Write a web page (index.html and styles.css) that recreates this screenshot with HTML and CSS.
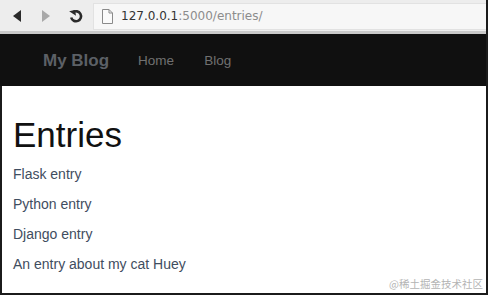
FILE: index.html
```html
<!DOCTYPE html>
<html lang="en">
<head>
<meta charset="utf-8">
<title>Entries</title>
<link rel="stylesheet" href="styles.css">
</head>
<body>
<div class="frame">
  <div class="toolbar">
    <div class="nav-buttons">
      <svg class="btn back" width="12" height="14" viewBox="0 0 12 14"><path d="M10 1 L2 7 L10 13 Z" fill="#2a2a2a"/></svg>
      <svg class="btn fwd" width="12" height="14" viewBox="0 0 12 14"><path d="M2 1 L10 7 L2 13 Z" fill="#a8a8a8"/></svg>
      <svg class="btn reload" width="16" height="16" viewBox="0 0 16 16"><path d="M3.2 9.5 A5 5 0 1 0 5 4.3" fill="none" stroke="#2a2a2a" stroke-width="2.6"/><path d="M1.5 2.5 L7.5 2.5 L7.5 8.2 Z" fill="#2a2a2a" transform="rotate(-10 5 5)"/></svg>
    </div>
    <div class="address">
      <svg class="doc" width="11" height="15" viewBox="0 0 11 15"><path d="M0.5 0.5 H7 L10.5 4 V14.5 H0.5 Z" fill="#fafafa" stroke="#8a8a8a"/><path d="M7 0.5 V4 H10.5" fill="none" stroke="#8a8a8a"/></svg>
      <span class="host">127.0.0.1</span><span class="path">:5000/entries/</span>
    </div>
  </div>
  <nav class="navbar">
    <a class="brand" href="#">My Blog</a>
    <a class="nav-link" href="#">Home</a>
    <a class="nav-link" href="#">Blog</a>
  </nav>
  <main class="content">
    <h1 class="title">Entries</h1>
    <ul class="entries">
      <li><a href="#">Flask entry</a></li>
      <li><a href="#">Python entry</a></li>
      <li><a href="#">Django entry</a></li>
      <li><a href="#">An entry about my cat Huey</a></li>
    </ul>
    <div class="watermark">@稀土掘金技术社区</div>
  </main>
</div>
</body>
</html>
```
FILE: styles.css
```css
* { box-sizing: border-box; }
html, body { margin: 0; padding: 0; }
body {
  width: 488px;
  height: 295px;
  overflow: hidden;
  background: #fff;
  font-family: "Liberation Sans", Arial, sans-serif;
}
.frame {
  width: 488px;
  height: 295px;
  display: flex;
  flex-direction: column;
  border-right: 2px solid #1b1b1b;
  border-bottom: 2px solid #1b1b1b;
}
.toolbar {
  height: 34px;
  background: #ededed;
  border-bottom: 3px solid #c9c9c9;
  display: flex;
  align-items: center;
  padding-top: 1px;
}
.nav-buttons {
  width: 93px;
  display: flex;
  align-items: center;
  padding-left: 11px;
}
.btn { display: block; }
.back { margin-right: 17px; }
.fwd { margin-right: 16px; }
.address {
  flex: 1;
  height: 27px;
  background: #f7f7f7;
  border: 1px solid #e2e2e2;
  border-right: none;
  display: flex;
  align-items: center;
  padding-left: 8px;
  font-family: "DejaVu Sans", sans-serif;
  font-size: 12px;
}
.doc { margin-right: 8px; }
.host { color: #333; }
.path { color: #8c8c8c; }
.navbar {
  height: 52px;
  background: #101010;
  display: flex;
  align-items: center;
  padding-left: 43px;
}
.navbar a { text-decoration: none; }
.brand {
  color: #5c6066;
  font-weight: bold;
  font-size: 17px;
  margin-right: 29px;
  margin-top: 1px;
}
.nav-link {
  color: #707070;
  font-size: 13.5px;
  margin-right: 30px;
  margin-top: 1px;
}
.content {
  flex: 1;
  position: relative;
  border-left: 2px solid #1b1b1b;
  padding-left: 11px;
}
.title {
  margin: 29px 0 4px;
  font-size: 35px;
  line-height: 40px;
  font-weight: normal;
  color: #111;
}
.entries {
  list-style: none;
  margin: 0;
  padding: 0;
}
.entries li {
  height: 30px;
  line-height: 30px;
  font-size: 14px;
}
.entries a {
  color: #3f4d60;
  text-decoration: none;
}
.watermark {
  position: absolute;
  right: 3px;
  bottom: 3px;
  font-family: "Noto Sans CJK SC", sans-serif;
  font-size: 10.5px;
  line-height: 12px;
  color: #b4b4b4;
}
```
